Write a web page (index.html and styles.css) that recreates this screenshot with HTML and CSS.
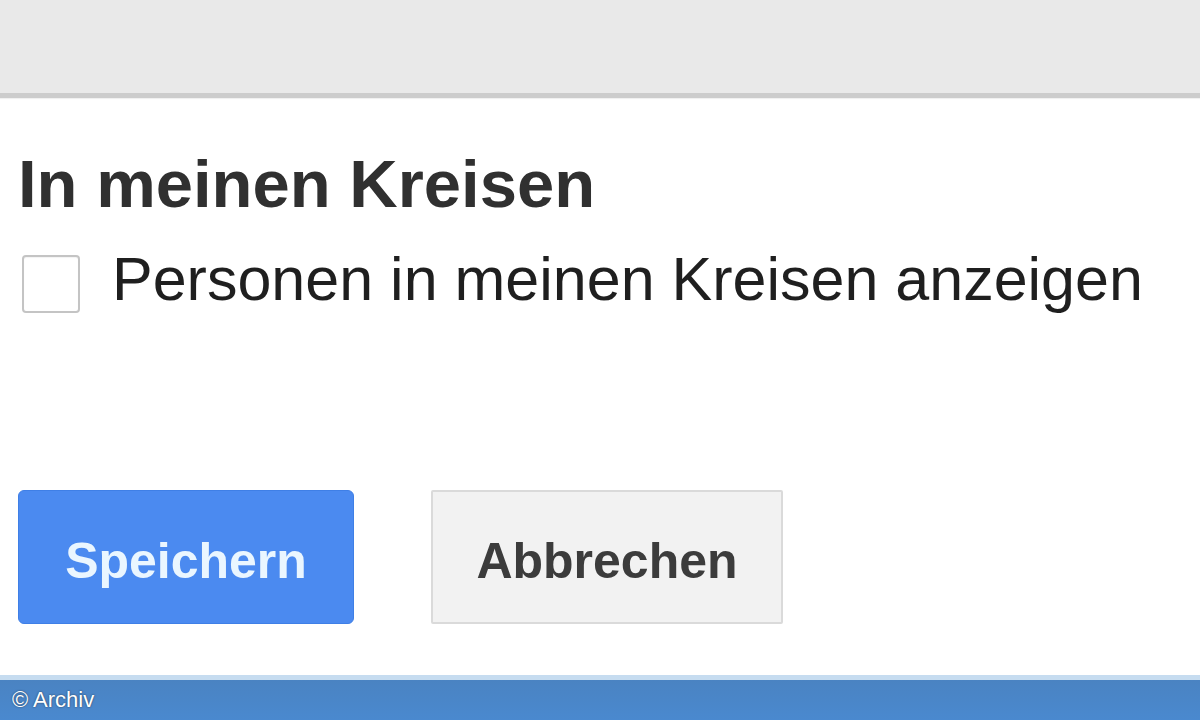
FILE: index.html
```html
<!DOCTYPE html>
<html lang="de">
<head>
<meta charset="utf-8">
<title>In meinen Kreisen</title>
<link rel="stylesheet" href="styles.css">
</head>
<body>
<div class="page">
  <header class="topbar"></header>
  <main class="content">
    <h1 class="title">In meinen Kreisen</h1>
    <label class="option">
      <span class="checkbox"></span>
      <span class="option-text">Personen in meinen Kreisen anzeigen</span>
    </label>
    <div class="actions">
      <button class="btn btn-primary" type="button">Speichern</button>
      <button class="btn btn-secondary" type="button">Abbrechen</button>
    </div>
  </main>
  <footer class="credit">
    <span class="credit-text">© Archiv</span>
  </footer>
</div>
</body>
</html>
```

FILE: styles.css
```css
* { box-sizing: border-box; }

html, body {
  margin: 0;
  padding: 0;
  background: #ffffff;
}

.page {
  width: 1200px;
  height: 720px;
  overflow: hidden;
  display: flex;
  flex-direction: column;
  font-family: "Liberation Sans", Arial, sans-serif;
}

.topbar {
  height: 98px;
  flex: none;
  background: #e9e9e9;
  border-bottom: 5px solid #cccccc;
  box-shadow: 0 1px 1px rgba(0,0,0,0.06);
}

.content {
  flex: 1;
  padding: 53px 0 0 18px;
}

.title {
  margin: 0;
  font-size: 67px;
  line-height: 66px;
  font-weight: bold;
  color: #303030;
}

.option {
  display: flex;
  align-items: flex-start;
  gap: 32px;
  margin-top: 31px;
  padding-left: 4px;
}

.checkbox {
  flex: none;
  width: 58px;
  height: 58px;
  margin-top: 7px;
  border: 2px solid #c4c4c4;
  border-radius: 4px;
  background: #ffffff;
  box-shadow: inset 0 1px 1px rgba(0,0,0,0.05);
}

.option-text {
  font-size: 61px;
  line-height: 62px;
  color: #1f1f1f;
}

.actions {
  display: flex;
  gap: 77px;
  margin-top: 177px;
}

.btn {
  height: 134px;
  font-family: "Liberation Sans", Arial, sans-serif;
  font-size: 50px;
  font-weight: bold;
  padding: 8px 0 0 0;
  cursor: pointer;
}

.btn-primary {
  width: 336px;
  background: #4b8af0;
  color: #eaf6ff;
  border: 1px solid #3f7fe6;
  border-radius: 6px;
}

.btn-secondary {
  width: 352px;
  background: #f2f2f2;
  color: #3c3c3c;
  border: 2px solid #dadada;
  border-radius: 2px;
}

.credit {
  flex: none;
  height: 45px;
  background: linear-gradient(#4a83c2, #4a89cf);
  border-top: 5px solid #c6dcf0;
  display: flex;
  align-items: center;
  padding-left: 12px;
}

.credit-text {
  color: #ffffff;
  font-size: 22px;
  text-shadow: 0 0 2px rgba(0,0,0,0.6);
}
```
